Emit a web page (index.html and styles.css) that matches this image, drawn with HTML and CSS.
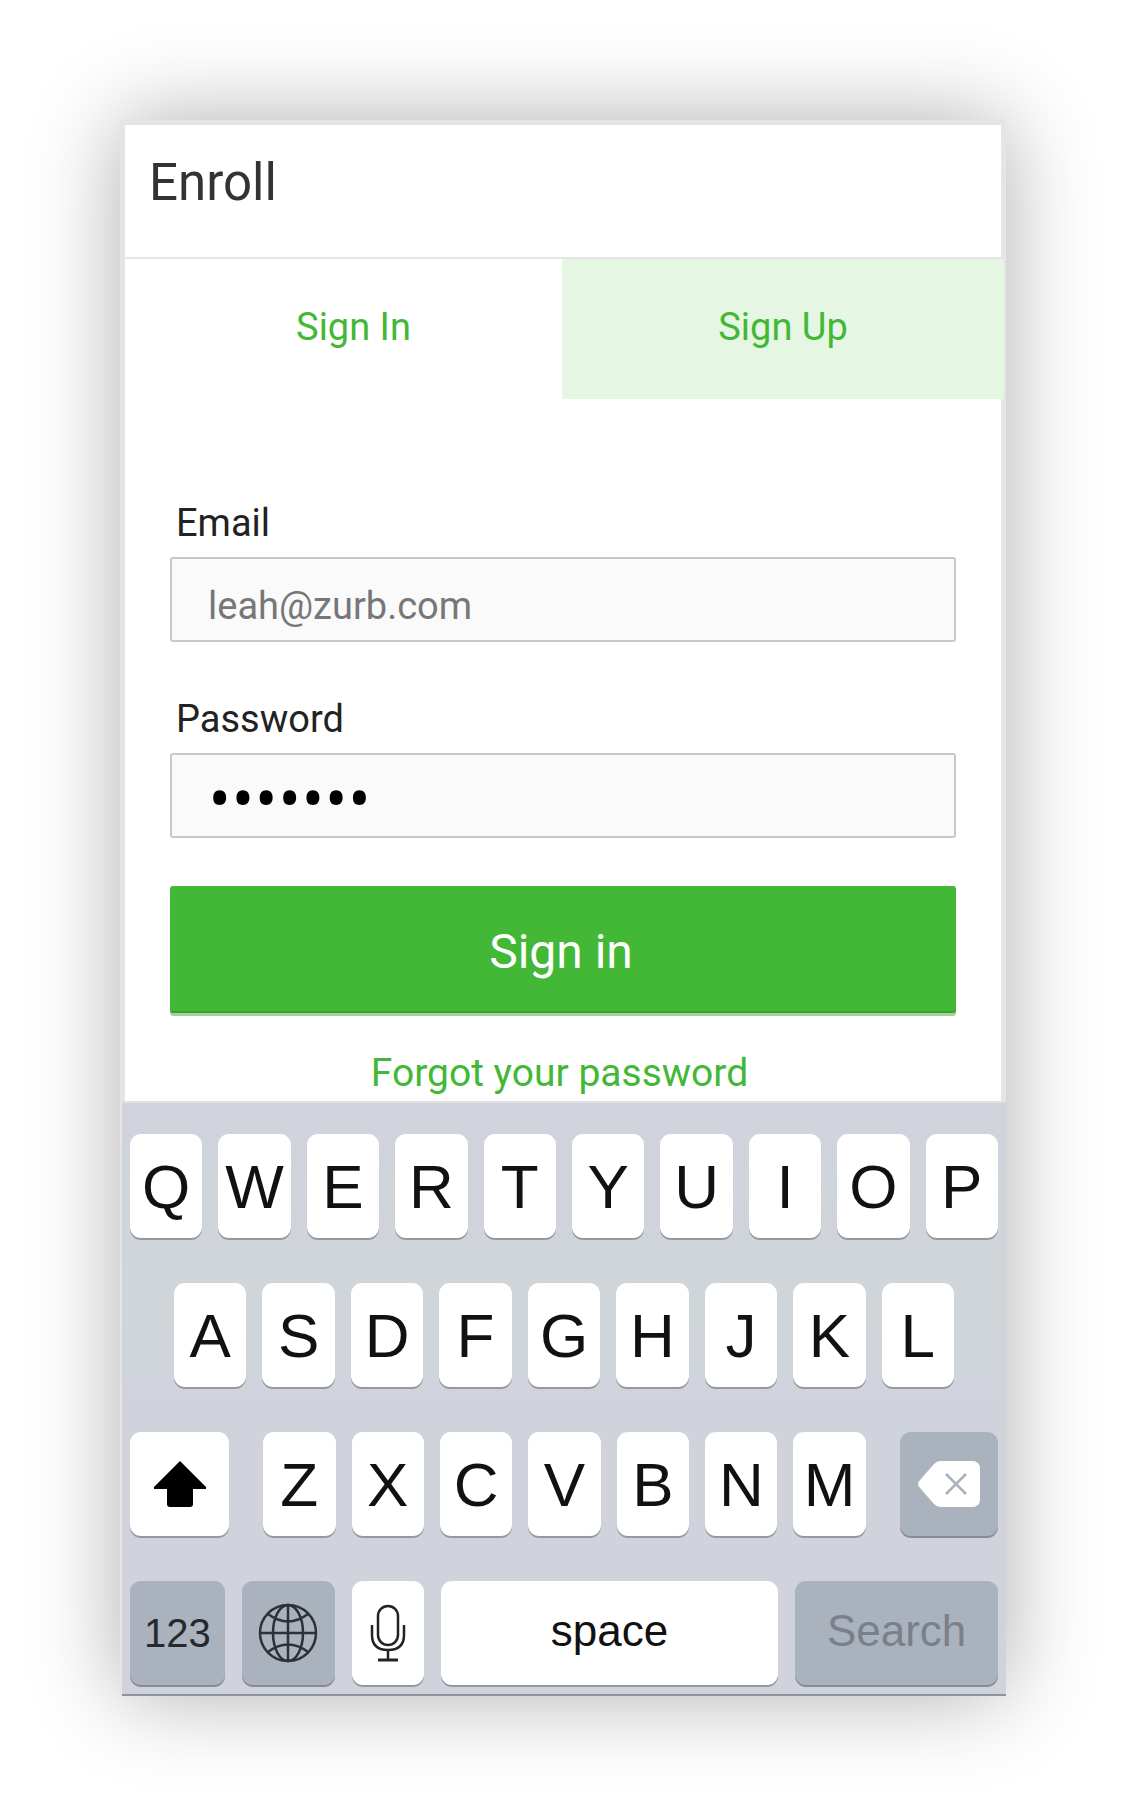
FILE: index.html
```html
<!DOCTYPE html>
<html lang="en">
<head>
<meta charset="utf-8">
<meta name="viewport" content="width=device-width, initial-scale=1">
<title>Enroll</title>
<link rel="stylesheet" href="styles.css">
</head>
<body>
<main class="phone">
  <header class="header"><h1 class="title">Enroll</h1></header>
  <nav class="tabs">
    <a class="tab tab-current" href="#signin">Sign In</a>
    <a class="tab tab-other" href="#signup">Sign Up</a>
  </nav>
  <form class="form">
    <label class="label" for="email">Email</label>
    <input class="field field-email" id="email" type="email" value="leah@zurb.com">
    <label class="label" for="password">Password</label>
    <input class="field field-password" id="password" type="password" value="enroll7">
    <button class="submit" type="button">Sign in</button>
    <a class="forgot" href="#forgot">Forgot your password</a>
  </form>
  <section class="keyboard" aria-label="Keyboard">
    <div class="row row-top">
      <button class="key">Q</button><button class="key">W</button><button class="key">E</button><button class="key">R</button><button class="key">T</button><button class="key">Y</button><button class="key">U</button><button class="key">I</button><button class="key">O</button><button class="key">P</button>
    </div>
    <div class="row row-home">
      <button class="key">A</button><button class="key">S</button><button class="key">D</button><button class="key">F</button><button class="key">G</button><button class="key">H</button><button class="key">J</button><button class="key">K</button><button class="key">L</button>
    </div>
    <div class="row row-shift">
      <button class="key" aria-label="Shift">
        <svg width="52" height="46" viewBox="0 0 52 46"><path d="M26 0 52 26v2H39v15q0 3-3 3H16q-3 0-3-3V28H0v-2z" fill="#000"/></svg>
      </button>
      <div class="row row-letters">
        <button class="key">Z</button><button class="key">X</button><button class="key">C</button><button class="key">V</button><button class="key">B</button><button class="key">N</button><button class="key">M</button>
      </div>
      <button class="key key-dark" aria-label="Delete">
        <svg width="62" height="46" viewBox="0 0 62 46"><path d="M22 0h32q8 0 8 8v30q0 8-8 8H22q-3 0-6-3L2 27q-4-4 0-8L16 3q3-3 6-3z" fill="#fff"/><path d="M28 13 48 33M48 13 28 33" stroke="#a9b2bd" stroke-width="2.5"/></svg>
      </button>
    </div>
    <div class="row row-bottom">
      <button class="key key-dark key-numbers">123</button>
      <button class="key key-dark" aria-label="Next keyboard">
        <svg width="60" height="60" viewBox="0 0 60 60" fill="none" stroke="#2d3135" stroke-width="2.5"><circle cx="30" cy="30" r="28"/><ellipse cx="30" cy="30" rx="15" ry="28"/><path d="M30 2v56M2 30h56M10 11q20 15 40 0M10 49q20-15 40 0"/></svg>
      </button>
      <button class="key" aria-label="Dictate">
        <svg width="36" height="58" viewBox="0 0 36 58" fill="none" stroke="#222" stroke-width="2.5"><rect x="8" y="2" width="20" height="39" rx="10"/><path d="M2 21v10q0 15 16 15t16-15V21M18 46v10"/><path d="M8 56h20" stroke-width="3"/></svg>
      </button>
      <button class="key key-word">space</button>
      <button class="key key-dark key-word key-search">Search</button>
    </div>
  </section>
</main>
</body>
</html>
```
FILE: styles.css
```css
* {
  box-sizing: border-box;
}

body {
  margin: 0;
  padding: 120px;
  background: #fff;
  font-family: Roboto, sans-serif;
  font-size: 38px;
  line-height: 44px;
}

.phone {
  border: 5px solid #e5e5e5;
  border-bottom: 0;
  background: #fff;
  box-shadow: 0 0 84px rgba(0, 0, 0, 0.32);
}

.header {
  padding: 28px 25px 44px 24px;
  border-bottom: 2px solid #e5e5e5;
}

.title {
  margin: 0;
  color: #333;
  font-size: 51px;
  font-weight: 400;
  line-height: 60px;
}

.tabs {
  display: grid;
  grid-template-columns: 437fr 442fr;
  margin-right: -3px;
}

.tab {
  padding: 46px 0 50px;
  color: #43b736;
  text-align: center;
  text-decoration: none;
}

.tab-current {
  padding-left: 20px;
}

.tab-other {
  background: #e5f6e2;
}

.form {
  display: flex;
  flex-direction: column;
  padding: 102px 45px 9px;
}

.label {
  margin-bottom: 12px;
  padding-left: 6px;
  color: #222;
}

.field {
  width: 100%;
  height: 85px;
  margin: 0 0 55px;
  padding: 0 36px;
  border: 2px solid #c8c8c8;
  border-radius: 3px;
  background: #fafafa;
  font: inherit;
}

.field-email {
  padding-top: 13px;
  color: #777;
}

.field-password {
  margin-bottom: 48px;
  color: #000;
  font-family: "Open Sans", sans-serif;
  font-size: 62px;
}

.submit {
  height: 127px;
  margin: 0 0 41px;
  padding: 6px 4px 0 0;
  border: 0;
  border-bottom: 2px solid #38a02d;
  border-radius: 3px;
  background: #43b736;
  box-shadow: 0 3px 0 #a2d29c;
  color: #fff;
  font-family: inherit;
  font-size: 48px;
}

.forgot {
  padding-right: 7px;
  color: #43b736;
  font-size: 39px;
  line-height: 38px;
  text-align: center;
  text-decoration: none;
}

.keyboard {
  display: grid;
  gap: 45px;
  margin: 0 -5px 0 -3px;
  padding: 31px 8px 9px;
  border-top: 2px solid #dde0e4;
  border-bottom: 2px solid #8f949c;
  background: linear-gradient(#d0d3dc, #d0d5da 28%, #d0d5da 38%, #d0d3dc 50%, #d0d3dc);
}

.row {
  display: grid;
  gap: 16px;
}

.row-top {
  grid-template-columns: repeat(10, 1fr);
}

.row-home {
  grid-template-columns: repeat(9, 1fr);
  padding: 0 44px;
}

.row-shift {
  grid-template-columns: 99fr 602fr 98fr;
  gap: 34px;
}

.row-letters {
  grid-template-columns: repeat(7, 1fr);
}

.row-bottom {
  grid-template-columns: 95fr 93fr 72fr 338fr 203fr;
  gap: 17px;
}

.key {
  display: flex;
  align-items: center;
  justify-content: center;
  min-width: 0;
  height: 104px;
  padding: 0;
  border: 0;
  border-radius: 11px;
  background: #fff;
  box-shadow: 0 2px 0 #95999f;
  color: #111;
  font-family: "Liberation Sans", sans-serif;
  font-size: 62px;
}

.key-dark {
  background: #a9b2bd;
  box-shadow: 0 2px 0 #888c92;
}

.key-word {
  padding-bottom: 4px;
  font-size: 44px;
}

.key-numbers {
  color: #26292d;
  font-size: 40px;
}

.key-search {
  color: #79808a;
}
```
